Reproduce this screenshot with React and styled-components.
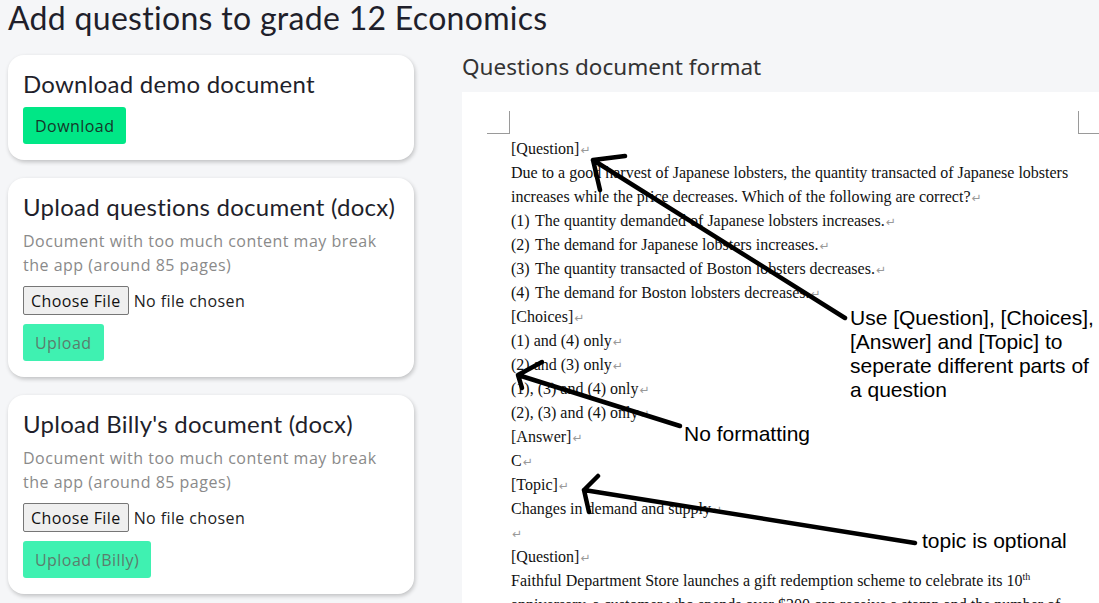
import React from "react";
import styled, { createGlobalStyle } from "styled-components";

const GlobalStyle = createGlobalStyle`
  html, body {
    margin: 0;
    padding: 0;
    background: #f5f6f8;
    overflow: hidden;
  }
  body {
    font-family: "Open Sans", "Liberation Sans", sans-serif;
    color: #212529;
  }
`;

const Page = styled.div`
  padding: 0 0 0 8px;
`;

const Title = styled.h1`
  margin: 0;
  height: 40px;
  font-family: Lato, "Noto Sans", sans-serif;
  font-weight: 400;
  font-size: 32px;
  line-height: 36px;
  color: #1f1f2b;
  letter-spacing: 0.3px;
`;

const Columns = styled.div`
  display: grid;
  grid-template-columns: 406px 1fr;
  column-gap: 48px;
  margin-top: 15px;
`;

const LeftSide = styled.div`
  display: flex;
  flex-direction: column;
  gap: 18px;
`;

const Card = styled.div`
  background: white;
  border-radius: 16px;
  padding: 16px 15px 16px 15px;
  box-shadow: 1px 2px 4px rgba(0, 0, 0, 0.22);
  display: flex;
  flex-direction: column;
  align-items: flex-start;
`;

const CardTitle = styled.h3`
  margin: 0 0 3px;
  font-family: Lato, "Noto Sans", sans-serif;
  font-weight: 400;
  font-size: 24px;
  line-height: 26px;
  color: #1f1f2b;
  letter-spacing: 0.25px;
`;

const Note = styled.p`
  margin: 6px 0 9px;
  font-family: "Open Sans", sans-serif;
  font-size: 16px;
  letter-spacing: 0.5px;
  line-height: 24px;
  color: #8a8a8a;
`;

const FileInput = styled.input`
  font-family: "Open Sans", "Liberation Sans", sans-serif;
  font-size: 16px;
  letter-spacing: 0.4px;
  height: 29px;
  color: #222;
  margin: 0 0 9px;

  &::file-selector-button {
    font-family: inherit;
    font-size: 16px;
    letter-spacing: 0.4px;
    height: 29px;
    padding: 0 7px;
    margin-right: 5px;
    border: 1px solid #767676;
    border-radius: 2px;
    background: #efefef;
    color: #111;
  }
`;

const Button = styled.button`
  border: none;
  border-radius: 3px;
  height: 37px;
  padding: 0 12px;
  font-family: "Open Sans", sans-serif;
  font-size: 16px;
  letter-spacing: 0.45px;
  background: ${(p) => (p.disabled ? "#3ff1b1" : "#00e786")};
  color: ${(p) => (p.disabled ? "#5b7d6d" : "#16382a")};
  margin-top: ${(p) => (p.$top ? p.$top : 0)}px;
`;

const RightSide = styled.div`
  display: flex;
  flex-direction: column;
`;

const Heading = styled.h2`
  margin: 0;
  height: 37px;
  font-family: "Noto Sans", sans-serif;
  font-weight: 400;
  font-size: 22.5px;
  line-height: 23px;
  color: #333;
`;

const Sheet = styled.div`
  position: relative;
  background: white;
  height: 520px;
  padding: 45px 0 0 49px;
  font-family: "Liberation Serif", "Times New Roman", serif;
  font-size: 16px;
  line-height: 24px;
  color: #111;
`;

const Corner = styled.span`
  position: absolute;
  top: 19px;
  width: 22px;
  height: 22px;
  ${(p) =>
    p.$right
      ? "left: 616px; border-left: 1px solid #9a9a9a; border-bottom: 1px solid #9a9a9a;"
      : "left: 25px; border-right: 1px solid #9a9a9a; border-bottom: 1px solid #9a9a9a;"}
`;

const Line = styled.div`
  white-space: pre;
  height: 24px;
`;

const Num = styled.span`
  display: inline-block;
  width: 24px;
`;

const Mark = styled.span`
  font-family: "DejaVu Sans", sans-serif;
  font-size: 12px;
  color: #999;
  margin-left: 1px;
`;

const Sup = styled.sup`
  font-size: 10px;
  line-height: 0;
`;

const Remark = styled.div`
  position: absolute;
  left: ${(p) => p.$x}px;
  top: ${(p) => p.$y}px;
  font-family: "Liberation Sans", Arial, sans-serif;
  font-size: 21px;
  line-height: 24px;
  color: #000;
  white-space: nowrap;
`;

const Arrows = styled.svg`
  position: absolute;
  left: 0;
  top: 0;
  width: 100%;
  height: 100%;
  pointer-events: none;
`;

const ret = <Mark>↵</Mark>;

const lines = [
  ["[Question]"],
  ["Due to a good harvest of Japanese lobsters, the quantity transacted of Japanese lobsters", false],
  ["increases while the price decreases. Which of the following are correct?"],
  ["The quantity demanded of Japanese lobsters increases.", true, "(1)"],
  ["The demand for Japanese lobsters increases.", true, "(2)"],
  ["The quantity transacted of Boston lobsters decreases.", true, "(3)"],
  ["The demand for Boston lobsters decreases.", true, "(4)"],
  ["[Choices]"],
  ["(1) and (4) only"],
  ["(2) and (3) only"],
  ["(1), (3) and (4) only"],
  ["(2), (3) and (4) only"],
  ["[Answer]"],
  ["C"],
  ["[Topic]"],
  ["Changes in demand and supply"],
  [""],
  ["[Question]"],
];

function Document() {
  return (
    <Sheet>
      <Corner />
      <Corner $right />
      {lines.map(([text, mark = true, num], i) => (
        <Line key={i}>
          {num && <Num>{num}</Num>}
          {text}
          {mark !== false && ret}
        </Line>
      ))}
      <Line>
        Faithful Department Store launches a gift redemption scheme to celebrate its 10
        <Sup>th</Sup>
      </Line>
      <Line>anniversary, a customer who spends over $200 can receive a stamp and the number of</Line>

      <Arrows>
        <g stroke="#000" strokeWidth="4.5" strokeLinecap="round" fill="none">
          <path d="M383 226 L131 68 M131 68 L163 64 M131 68 L138 98" />
          <path d="M218 334 L56 283 M56 283 L80 270 M56 283 L60 296" />
          <path d="M453 451 L122 398 M122 398 L136 384 M122 398 L127 420" />
        </g>
      </Arrows>
      <Remark $x={388} $y={214}>
        Use [Question], [Choices],
        <br />
        [Answer] and [Topic] to
        <br />
        seperate different parts of
        <br />a question
      </Remark>
      <Remark $x={222} $y={330}>No formatting</Remark>
      <Remark $x={460} $y={437}>topic is optional</Remark>
    </Sheet>
  );
}

export default function App() {
  return (
    <>
      <GlobalStyle />
      <Page>
        <Title>Add questions to grade 12 Economics</Title>
        <Columns>
          <LeftSide>
            <Card>
              <CardTitle>Download demo document</CardTitle>
              <Button $top={7}>Download</Button>
            </Card>
            <Card>
              <CardTitle>Upload questions document (docx)</CardTitle>
              <Note>
                Document with too much content may break
                <br />
                the app (around 85 pages)
              </Note>
              <FileInput type="file" />
              <Button disabled>Upload</Button>
            </Card>
            <Card>
              <CardTitle>Upload Billy's document (docx)</CardTitle>
              <Note>
                Document with too much content may break
                <br />
                the app (around 85 pages)
              </Note>
              <FileInput type="file" />
              <Button disabled>Upload (Billy)</Button>
            </Card>
          </LeftSide>
          <RightSide>
            <Heading>Questions document format</Heading>
            <Document />
          </RightSide>
        </Columns>
      </Page>
    </>
  );
}
